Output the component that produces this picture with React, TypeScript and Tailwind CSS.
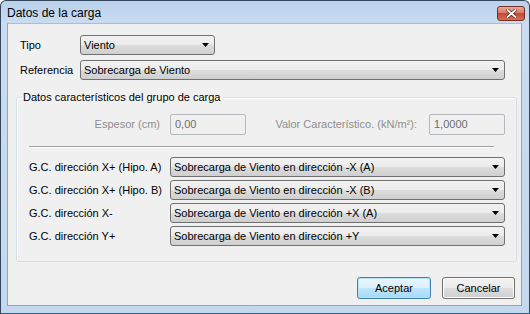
import type { ReactNode } from "react";

const FONT = "font-['Liberation_Sans',Arial,sans-serif]";

function Arrow() {
  return (
    <svg width="7" height="4" viewBox="0 0 7 4" className="shrink-0">
      <path d="M0 0h7L3.5 4z" fill="#000" />
    </svg>
  );
}

function Combo({ value, width }: { value: string; width: string }) {
  return (
    <div
      className={`${width} flex h-[20px] shrink-0 items-center justify-between rounded-[3px] border border-[#707070] bg-[linear-gradient(#f2f2f2_0%,#ebebeb_50%,#dddddd_50%,#cfcfcf_100%)] pr-[5px] pl-[3px] text-[11px] text-black`}
    >
      <span className="leading-none">{value}</span>
      <Arrow />
    </div>
  );
}

function Disabled({ value }: { value: string }) {
  return (
    <div className="flex h-[21px] w-[76px] shrink-0 items-center rounded-[2px] border border-[#b5b9bd] bg-[#f0f0f0] pl-[4px] text-[11px] text-[#6d6d6d]">
      {value}
    </div>
  );
}

function Button({ children, primary }: { children: ReactNode; primary?: boolean }) {
  return (
    <button
      type="button"
      className={
        primary
          ? "flex h-[22px] w-[74px] items-center justify-center rounded-[3px] border border-[#3c7fb1] bg-[linear-gradient(#eaf6fd_0%,#d9f0fc_50%,#bee6fd_50%,#a7d9f5_100%)] text-[11px] text-black shadow-[inset_0_0_0_1px_#b8e3f8]"
          : "flex h-[22px] w-[73px] items-center justify-center rounded-[3px] border border-[#707070] bg-[linear-gradient(#f2f2f2_0%,#ebebeb_50%,#dddddd_50%,#cfcfcf_100%)] text-[11px] text-black shadow-[inset_0_0_0_1px_#fcfcfc]"
      }
    >
      {children}
    </button>
  );
}

const rows = [
  ["G.C. dirección X+ (Hipo. A)", "Sobrecarga de Viento en dirección -X (A)"],
  ["G.C. dirección X+ (Hipo. B)", "Sobrecarga de Viento en dirección -X (B)"],
  ["G.C. dirección X-", "Sobrecarga de Viento en dirección +X (A)"],
  ["G.C. dirección Y+", "Sobrecarga de Viento en dirección +Y"],
];

export default function App() {
  return (
    <div
      className={`${FONT} flex h-[314px] w-[530px] flex-col rounded-t-[6px] border border-[#35475c] border-b-[#0f6f94] bg-[linear-gradient(#b9d1ea_0px,#c9dcf1_22px,#c4d8ef_100%)]`}
    >
      {/* title bar */}
      <div className="flex h-[22px] shrink-0 items-center justify-between pr-[4px] pl-[6px]">
        <span className="pt-[1px] text-[12px] text-black">Datos de la carga</span>
        <div className="mt-[2px] flex h-[15px] w-[28px] items-center justify-center rounded-[3px] border border-[#7a2e22] bg-[linear-gradient(#e9a99c_0%,#d9735f_50%,#c64a31_50%,#d3705a_100%)]">
          <svg width="11" height="9" viewBox="0 0 11 9">
            <path d="M1.5 1l8 7M9.5 1l-8 7" stroke="#5a1a10" strokeWidth="3.2" strokeLinecap="square" />
            <path d="M1.5 1l8 7M9.5 1l-8 7" stroke="#fff" strokeWidth="1.8" strokeLinecap="square" />
          </svg>
        </div>
      </div>

      {/* client area */}
      <div className="mr-[7px] mb-[7px] ml-[6px] flex flex-1 flex-col border border-[#8ea6c2] border-t-[#a9bdd4] bg-[#f0f0f0] text-[11px] text-black">
        <div className="mt-[11px] flex items-center">
          <span className="w-[72px] shrink-0 pl-[12px]">Tipo</span>
          <Combo value="Viento" width="w-[135px]" />
        </div>
        <div className="mt-[5px] flex items-center">
          <span className="w-[72px] shrink-0 pl-[12px]">Referencia</span>
          <Combo value="Sobrecarga de Viento" width="w-[425px]" />
        </div>

        <fieldset className="mt-[11px] mr-[4px] ml-[8px] rounded-[3px] border border-[#d5dfe5] pb-[15px] shadow-[inset_1px_1px_0_#fff]">
          <legend className="ml-[4px] px-[2px] leading-[13px]">
            Datos característicos del grupo de carga
          </legend>
          <div className="mt-[10px] flex items-center">
            <span className="w-[153px] shrink-0 pr-[10px] text-right text-[#8d8d8d]">Espesor (cm)</span>
            <Disabled value="0,00" />
            <span className="w-[183px] shrink-0 pr-[12px] text-right text-[#8d8d8d]">
              Valor Característico. (kN/m²):
            </span>
            <Disabled value="1,0000" />
          </div>
          <div className="mt-[11px] mr-[22px] ml-[12px] h-[2px] border-t border-b border-t-[#a0a0a0] border-b-white" />
          <div className="mt-[9px] flex flex-col gap-[3px]">
            {rows.map(([label, value]) => (
              <div key={label} className="flex items-center">
                <span className="w-[153px] shrink-0 pl-[12px]">{label}</span>
                <Combo value={value} width="w-[335px]" />
              </div>
            ))}
          </div>
        </fieldset>

        <div className="mt-auto mb-[6px] flex justify-end gap-[11px] pr-[6px]">
          <Button primary>Aceptar</Button>
          <Button>Cancelar</Button>
        </div>
      </div>
    </div>
  );
}
